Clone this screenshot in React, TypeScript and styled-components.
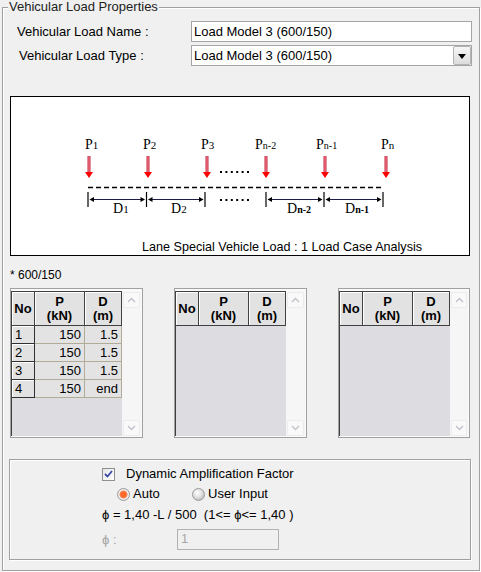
import React from 'react';
import styled, { createGlobalStyle } from 'styled-components';

const Global = createGlobalStyle`
  html, body { margin: 0; padding: 0; background: #f0f0f0; }
  body { font-family: "Liberation Sans", Arial, sans-serif; font-size: 13px; color: #000; }
  * { box-sizing: border-box; }
`;

const Page = styled.div`
  width: 481px;
  height: 572px;
  background: #f0f0f0;
  padding: 7px 0 0 2px;
  overflow: hidden;
`;

const Group = styled.section`
  position: relative;
  width: 478px;
  height: 564px;
  border: 1px solid #a0a0a0;
  box-shadow: 1px 1px 0 #fff, inset 1px 1px 0 #fff;
  padding: 13px 9px 0 7px;
  display: flex;
  flex-direction: column;
`;

const Legend = styled.div`
  position: absolute;
  top: -9px;
  left: 5px;
  padding: 0 1px;
  line-height: 15px;
  background: #f0f0f0;
  color: #222;
`;

const FieldRow = styled.div<{ $top: number }>`
  display: flex;
  align-items: center;
  height: 21px;
  margin-top: ${(p) => p.$top}px;
`;

const FieldLabel = styled.div<{ $indent: number }>`
  padding-left: ${(p) => p.$indent}px;
  line-height: 15px;
`;

const TextBox = styled.div`
  margin-left: auto;
  margin-right: -2px;
  width: 281px;
  height: 21px;
  border: 1px solid #a5a5a5;
  background: #fff;
  padding-left: 2px;
  line-height: 19px;
  display: flex;
  align-items: center;
`;

const SelectBox = styled(TextBox)`
  padding-right: 0;
`;

const SelectText = styled.div`
  flex: 1;
`;

const DropButton = styled.div`
  width: 18px;
  height: 19px;
  border: 1px solid #b4b4b4;
  border-radius: 2px;
  background: linear-gradient(#f6f6f6, #dcdcdc);
  display: flex;
  align-items: center;
  justify-content: center;
`;

const Triangle = styled.div`
  width: 0;
  height: 0;
  border-left: 4px solid transparent;
  border-right: 4px solid transparent;
  border-top: 5px solid #000;
  margin-top: 1px;
`;

const Diagram = styled.div`
  margin-top: 30px;
  width: 460px;
  height: 160px;
  border: 1px solid #000;
  background: #fff;
  display: flex;
  flex-direction: column;
`;

const DiagramSvg = styled.svg`
  display: block;
  width: 458px;
  height: 143px;
`;

const Caption = styled.div`
  padding-left: 131px;
  line-height: 14px;
  font-size: 12.6px;
`;

const Note = styled.div`
  margin-top: 12px;
  line-height: 14px;
  font-size: 12px;
`;

const Tables = styled.div`
  margin-top: 6px;
  display: grid;
  grid-template-columns: 133px 133px 132px;
  column-gap: 31px;
`;

const TableBox = styled.div`
  height: 150px;
  border: 1px solid #a0a0a0;
  background: #fafafa;
  padding: 2px 1px 1px 0;
  display: flex;
`;

const GridArea = styled.div`
  width: 111px;
  border-left: 1px solid #404040;
  border-top: 1px solid #404040;
  background: #dcdce1;
  display: flex;
  flex-direction: column;
`;

const Row = styled.div`
  display: flex;
`;

const HeadCell = styled.div<{ $w: number }>`
  width: ${(p) => p.$w}px;
  height: 34px;
  background: #e2e2e2;
  border-right: 1px solid #404040;
  border-bottom: 1px solid #404040;
  box-shadow: inset 1px 1px 0 #fff;
  font-weight: bold;
  font-size: 13px;
  line-height: 14px;
  display: flex;
  flex-direction: column;
  align-items: center;
  justify-content: center;
  text-align: center;
`;

const NoCell = styled.div`
  width: 23px;
  height: 18px;
  background: #e2e2e2;
  border-right: 1px solid #303030;
  border-bottom: 1px solid #303030;
  box-shadow: inset 1px 1px 0 #fff;
  padding-left: 3px;
  line-height: 17px;
  font-size: 13px;
`;

const DataCell = styled.div<{ $w: number }>`
  width: ${(p) => p.$w}px;
  height: 18px;
  background: #e3e3e3;
  border-right: 1px solid #b0ac98;
  border-bottom: 1px solid #b0ac98;
  padding-right: 3px;
  text-align: right;
  line-height: 17px;
  font-size: 13px;
`;

const ScrollBar = styled.div`
  width: 19px;
  background: #f6f6f6;
  display: flex;
  flex-direction: column;
  justify-content: space-between;
  padding: 1px 1px 0 1px;
`;

const ScrollBtn = styled.div`
  height: 16px;
  border: 1px solid #ececec;
  border-radius: 2px;
  background: #f9f9f9;
  display: flex;
  align-items: center;
  justify-content: center;
`;

const OptionBox = styled.div`
  margin-top: 21px;
  margin-left: -1px;
  width: 462px;
  height: 101px;
  border: 1px solid #a0a0a0;
  box-shadow: 1px 1px 0 #fff, inset 1px 1px 0 #fff;
  padding: 7px 0 0 92px;
  display: flex;
  flex-direction: column;
`;

const OptRow = styled.div<{ $top: number; $indent?: number }>`
  display: flex;
  align-items: center;
  height: 14px;
  margin-top: ${(p) => p.$top}px;
  padding-left: ${(p) => p.$indent ?? 0}px;
  line-height: 14px;
`;

const CheckBox = styled.div`
  width: 13px;
  height: 13px;
  border: 1px solid #8e8f8f;
  background: linear-gradient(135deg, #e6e6e6, #ffffff);
  display: flex;
  align-items: center;
  justify-content: center;
  margin-right: 11px;
`;

const Radio = styled.div<{ $on: boolean }>`
  width: 13px;
  height: 13px;
  border-radius: 50%;
  border: 1px solid #9a9a9a;
  background: ${(p) =>
    p.$on
      ? 'radial-gradient(circle at 50% 50%, #ff6a2a 0 2.5px, #f08a5a 3.5px, #f3f3f3 4.5px, #d6d6d6 100%)'
      : 'radial-gradient(circle at 40% 35%, #ffffff 0, #e0e0e0 45%, #a8a8a8 100%)'};
  margin-right: 3px;
`;

const RadioLabel = styled.span<{ $w?: number }>`
  display: inline-block;
  width: ${(p) => (p.$w ? `${p.$w}px` : 'auto')};
`;

const PhiRow = styled.div`
  display: flex;
  align-items: center;
  height: 21px;
  margin-top: 7px;
`;

const PhiLabel = styled.div`
  width: 75px;
  color: #a3a3a3;
`;

const PhiInput = styled.div`
  width: 102px;
  height: 21px;
  border: 1px solid #b2b2b2;
  background: #f0f0f0;
  color: #a8a8a8;
  padding-left: 3px;
  line-height: 17px;
`;

type Pt = { x: number; main: string; sub: string };

const loads: Pt[] = [
  { x: 89, main: 'P', sub: '1' },
  { x: 148, main: 'P', sub: '2' },
  { x: 207, main: 'P', sub: '3' },
  { x: 266, main: 'P', sub: 'n-2' },
  { x: 325, main: 'P', sub: 'n-1' },
  { x: 386, main: 'P', sub: 'n' },
];

const labelX = [85, 143, 201, 255, 316, 381];
const ticks = [88, 146.5, 205, 266, 324, 383];
const spans: [number, number, string, number][] = [
  [88, 146.5, '1', 113],
  [146.5, 205, '2', 171],
  [266, 324, 'n-2', 287],
  [324, 383, 'n-1', 345],
];

const Dots: React.FC<{ y: number }> = ({ y }) => (
  <>
    {[0, 1, 2, 3, 4, 5].map((i) => (
      <rect key={i} x={220 + i * 5.4} y={y} width={2} height={2} fill="#000" />
    ))}
  </>
);

const LoadDiagram: React.FC = () => (
  <DiagramSvg viewBox="11 97 458 143">
    <defs>
      <linearGradient id="shaft" x1="0" x2="1" y1="0" y2="0">
        <stop offset="0" stopColor="#c02840" />
        <stop offset="0.5" stopColor="#f07080" />
        <stop offset="1" stopColor="#c02840" />
      </linearGradient>
    </defs>
    {loads.map((l, i) => (
      <g key={i}>
        <text x={labelX[i]} y={149} fontFamily='"Liberation Serif", "Times New Roman", serif' fontSize={14}>
          {l.main}
          <tspan fontSize={l.sub.length > 1 ? 10 : 11}>{l.sub}</tspan>
        </text>
        <rect x={l.x - 1.5} y={156} width={3} height={17} fill="url(#shaft)" />
        <polygon points={`${l.x - 4},172 ${l.x + 4},172 ${l.x},178`} fill="#ff0000" />
      </g>
    ))}
    <Dots y={171} />
    <line x1={88} x2={384} y1={187.5} y2={187.5} stroke="#000" strokeWidth={1.4} strokeDasharray="5 3" />
    {ticks.map((t, i) => (
      <line key={i} x1={t} x2={t} y1={192} y2={207} stroke="#000" strokeWidth={1.2} />
    ))}
    {spans.map(([a, b, sub, lx], i) => (
      <g key={i}>
        <line x1={a + 3} x2={b - 3} y1={199.5} y2={199.5} stroke="#1c1c48" strokeWidth={1.2} />
        <polygon points={`${a + 1.5},199.5 ${a + 6},197 ${a + 6},202`} fill="#000" />
        <polygon points={`${b - 1.5},199.5 ${b - 6},197 ${b - 6},202`} fill="#000" />
        <text x={lx} y={212.5} fontFamily='"Liberation Serif", "Times New Roman", serif' fontSize={14}>
          D
          <tspan fontSize={sub.length > 1 ? 10 : 11} fontWeight={sub.length > 1 ? 'bold' : 'normal'}>
            {sub}
          </tspan>
        </text>
      </g>
    ))}
    <Dots y={199} />
  </DiagramSvg>
);

const Chevron: React.FC<{ up?: boolean }> = ({ up }) => (
  <svg width="9" height="6" viewBox="0 0 9 6">
    <polyline
      points={up ? '1,5 4.5,1.5 8,5' : '1,1 4.5,4.5 8,1'}
      fill="none"
      stroke="#c4c4cc"
      strokeWidth="1.5"
    />
  </svg>
);

type DataRow = { no: string; p: string; d: string };

const LoadTable: React.FC<{ rows: DataRow[] }> = ({ rows }) => (
  <TableBox>
    <GridArea>
      <Row>
        <HeadCell $w={23}>No</HeadCell>
        <HeadCell $w={50}>
          <span>P</span>
          <span>(kN)</span>
        </HeadCell>
        <HeadCell $w={37}>
          <span>D</span>
          <span>(m)</span>
        </HeadCell>
      </Row>
      {rows.map((r) => (
        <Row key={r.no}>
          <NoCell>{r.no}</NoCell>
          <DataCell $w={50}>{r.p}</DataCell>
          <DataCell $w={37}>{r.d}</DataCell>
        </Row>
      ))}
    </GridArea>
    <ScrollBar>
      <ScrollBtn>
        <Chevron up />
      </ScrollBtn>
      <ScrollBtn>
        <Chevron />
      </ScrollBtn>
    </ScrollBar>
  </TableBox>
);

const rows1: DataRow[] = [
  { no: '1', p: '150', d: '1.5' },
  { no: '2', p: '150', d: '1.5' },
  { no: '3', p: '150', d: '1.5' },
  { no: '4', p: '150', d: 'end' },
];

export default function App() {
  return (
    <Page>
      <Global />
      <Group>
        <Legend>Vehicular Load Properties</Legend>
        <FieldRow $top={0}>
          <FieldLabel $indent={7}>Vehicular Load Name :</FieldLabel>
          <TextBox>Load Model 3 (600/150)</TextBox>
        </FieldRow>
        <FieldRow $top={3}>
          <FieldLabel $indent={9}>Vehicular Load Type :</FieldLabel>
          <SelectBox>
            <SelectText>Load Model 3 (600/150)</SelectText>
            <DropButton>
              <Triangle />
            </DropButton>
          </SelectBox>
        </FieldRow>
        <Diagram>
          <LoadDiagram />
          <Caption>Lane Special Vehicle Load : 1 Load Case Analysis</Caption>
        </Diagram>
        <Note>* 600/150</Note>
        <Tables>
          <LoadTable rows={rows1} />
          <LoadTable rows={[]} />
          <LoadTable rows={[]} />
        </Tables>
        <OptionBox>
          <OptRow $top={0}>
            <CheckBox>
              <svg width="9" height="8" viewBox="0 0 9 8">
                <polyline points="1,4 3.5,6.5 8,1" fill="none" stroke="#3a4aa8" strokeWidth="1.8" />
              </svg>
            </CheckBox>
            Dynamic Amplification Factor
          </OptRow>
          <OptRow $top={6} $indent={15}>
            <Radio $on />
            <RadioLabel $w={59}>Auto</RadioLabel>
            <Radio $on={false} />
            <RadioLabel>User Input</RadioLabel>
          </OptRow>
          <OptRow $top={7}>ϕ = 1,40 -L / 500&nbsp;&nbsp;(1&lt;= ϕ&lt;= 1,40 )</OptRow>
          <PhiRow>
            <PhiLabel>ϕ :</PhiLabel>
            <PhiInput>1</PhiInput>
          </PhiRow>
        </OptionBox>
      </Group>
    </Page>
  );
}
